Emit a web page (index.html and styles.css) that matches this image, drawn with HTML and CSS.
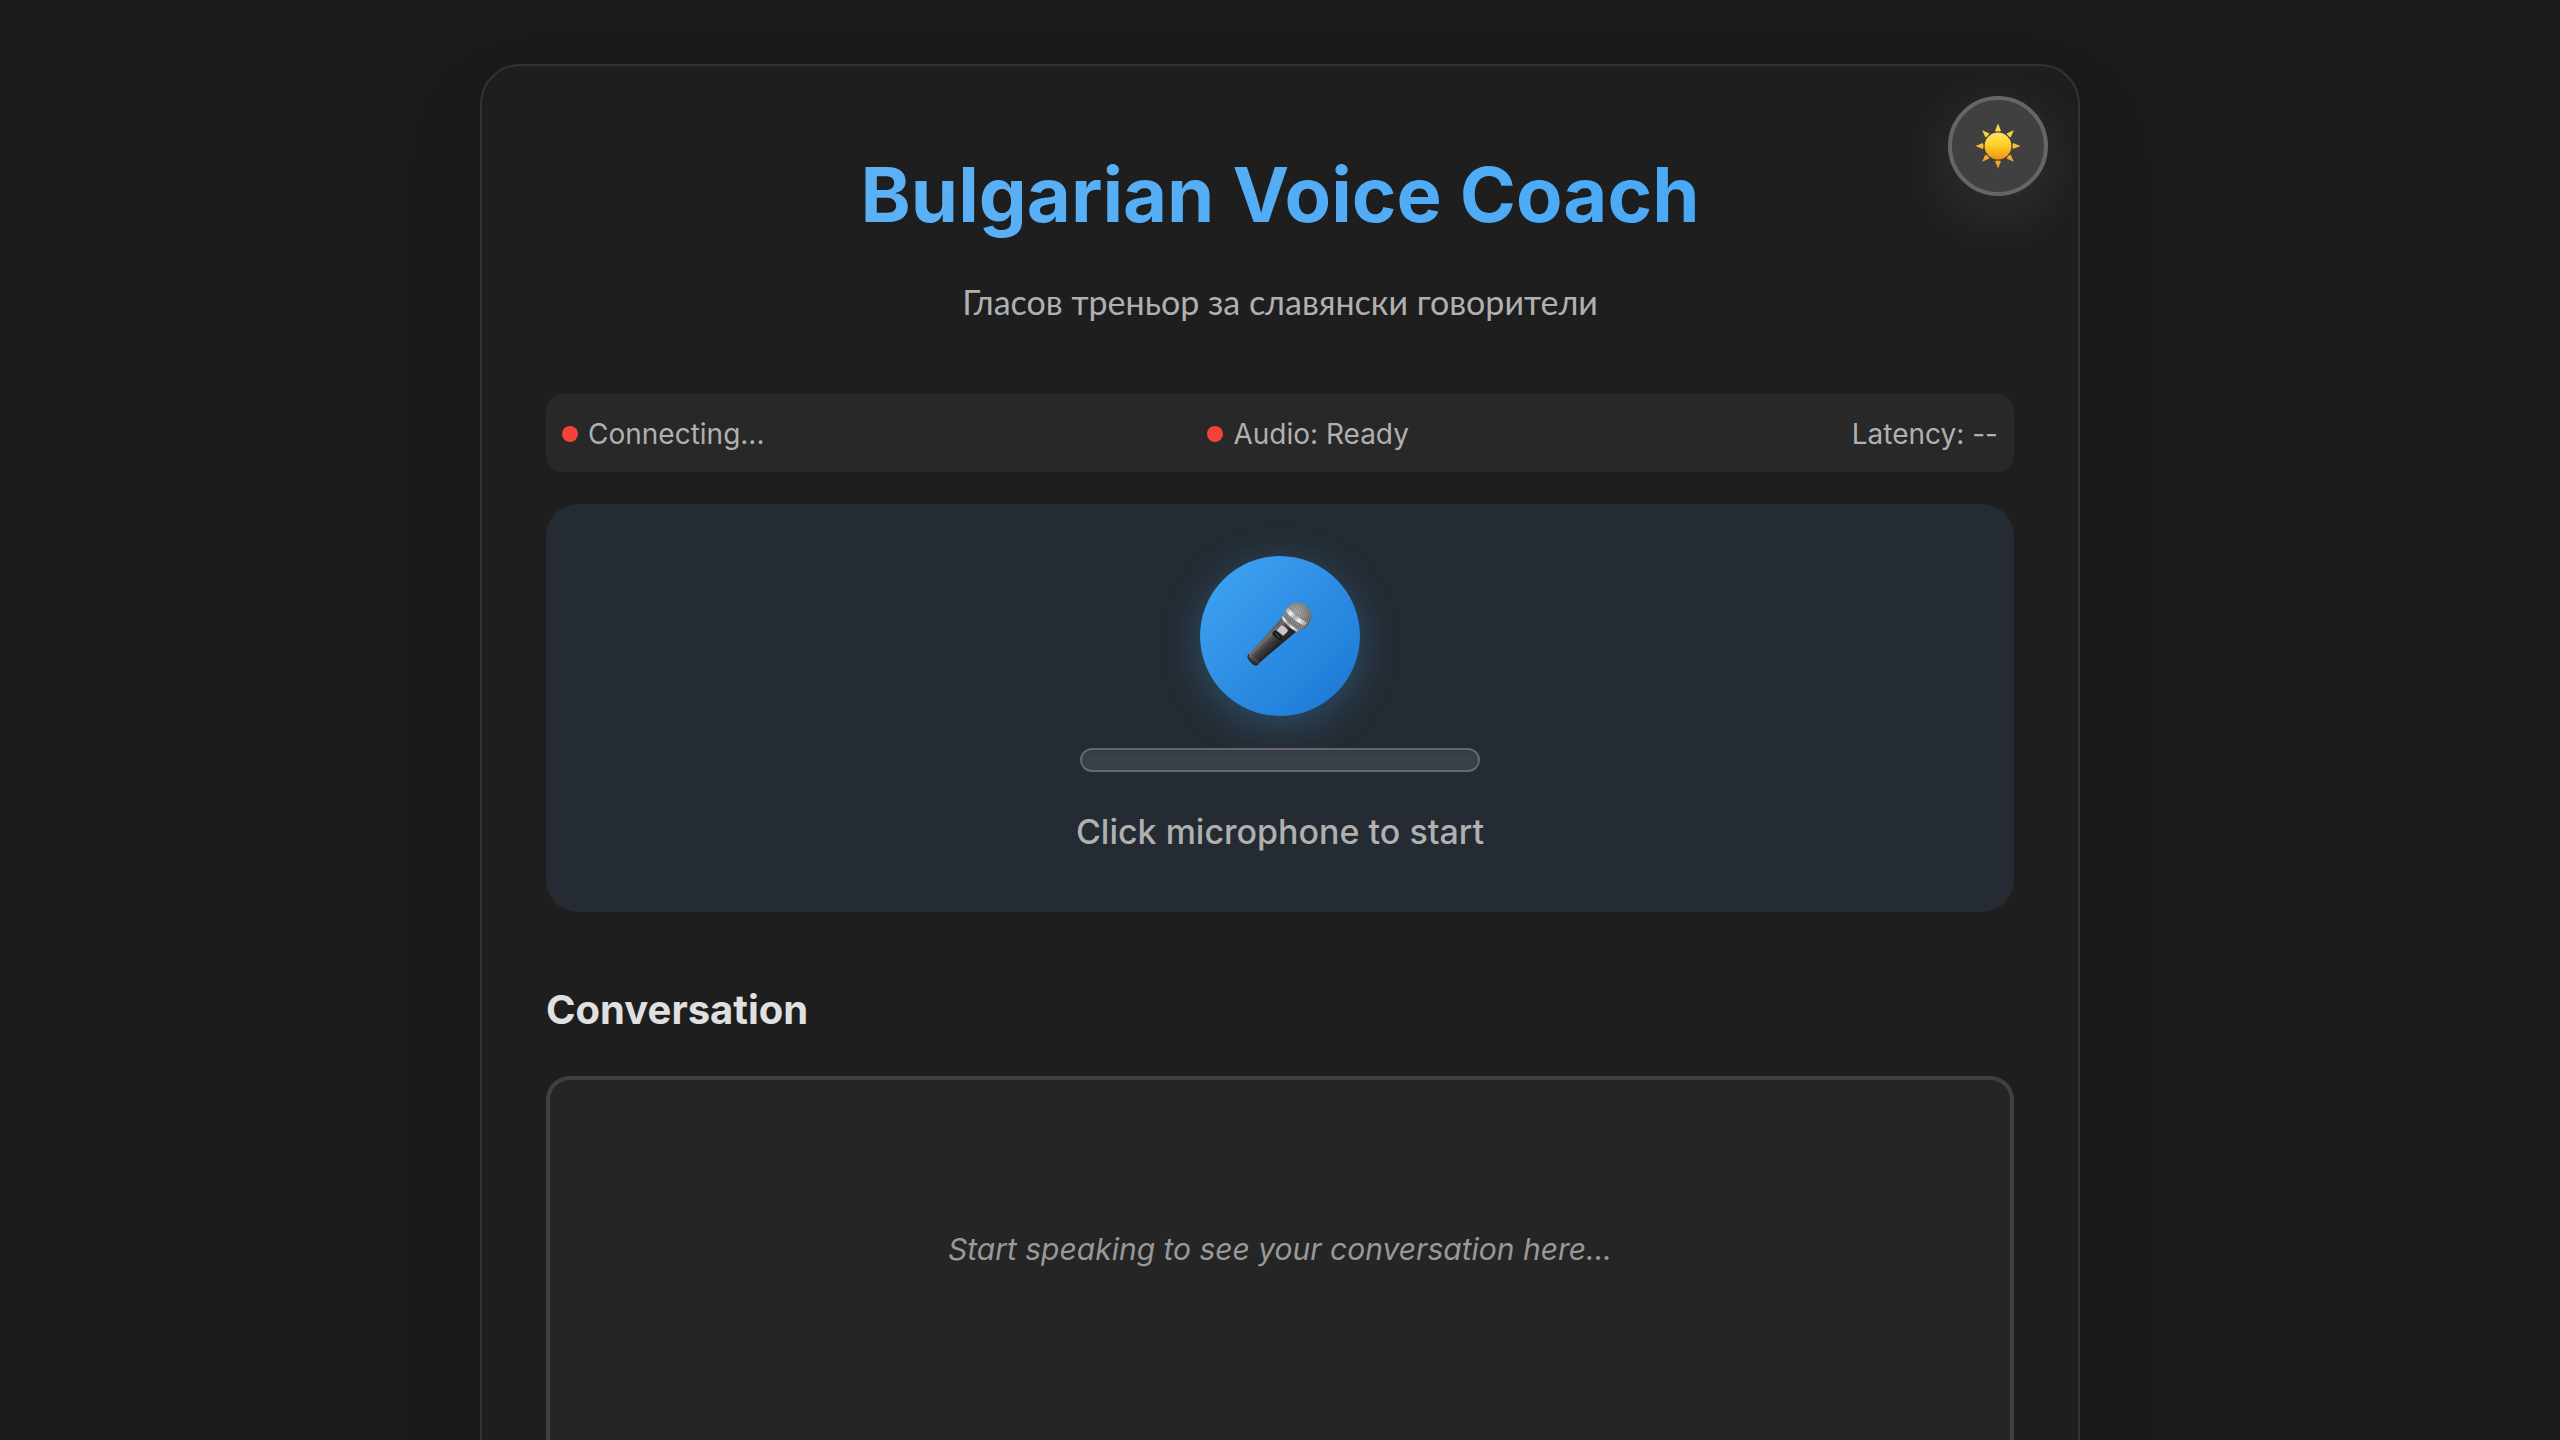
FILE: index.html
```html
<!DOCTYPE html>
<html lang="en">
<head>
<meta charset="utf-8">
<meta name="viewport" content="width=device-width, initial-scale=1">
<title>Bulgarian Voice Coach</title>
<link rel="stylesheet" href="styles.css">
</head>
<body>
<main class="container">
  <button class="theme-toggle" type="button" aria-label="Switch to light theme">
    <svg class="sun-icon" viewBox="-24 -24 48 48" aria-hidden="true">
      <defs>
        <linearGradient id="sun-disc" x1="0" y1="0" x2="0" y2="1">
          <stop offset="0" stop-color="#fde06a"/>
          <stop offset="0.25" stop-color="#fddb3e"/>
          <stop offset="0.5" stop-color="#fccb22"/>
          <stop offset="1" stop-color="#f2930f"/>
        </linearGradient>
        <linearGradient id="sun-rays" gradientUnits="userSpaceOnUse" x1="0" y1="-22" x2="0" y2="22">
          <stop offset="0" stop-color="#fde047"/>
          <stop offset="1" stop-color="#f59a28"/>
        </linearGradient>
      </defs>
      <path fill="url(#sun-rays)" d="M0-22.5 3-15Q0-13.8-3-15ZM0 22.5 3 15Q0 13.8-3 15ZM-22.5 0-15-3Q-13.8 0-15 3ZM22.5 0 15-3Q13.8 0 15 3ZM-15.8-15.8-8.6-12.6Q-9.8-9.8-12.6-8.6ZM15.8-15.8 8.6-12.6Q9.8-9.8 12.6-8.6ZM-15.8 15.8-8.6 12.6Q-9.8 9.8-12.6 8.6ZM15.8 15.8 8.6 12.6Q9.8 9.8 12.6 8.6Z"/>
      <circle r="13.4" fill="url(#sun-disc)"/>
    </svg>
  </button>

  <header class="header">
    <h1 class="title">Bulgarian Voice Coach</h1>
    <p class="subtitle" lang="bg">Гласов треньор за славянски говорители</p>
  </header>

  <div class="status-bar" role="status">
    <div class="status-item"><span class="status-dot"></span><span>Connecting...</span></div>
    <div class="status-item"><span class="status-dot"></span><span>Audio: Ready</span></div>
    <div class="status-item"><span>Latency: --</span></div>
  </div>

  <section class="voice-panel">
    <button class="mic-button" type="button" aria-label="Start recording">
      <svg class="mic-icon" viewBox="0 8 240 240" aria-hidden="true">
        <defs>
          <linearGradient id="mic-body" gradientUnits="userSpaceOnUse" x1="74" y1="124" x2="108" y2="160">
            <stop offset="0" stop-color="#5a5a5a"/>
            <stop offset="0.25" stop-color="#6f6f6f"/>
            <stop offset="0.5" stop-color="#444"/>
            <stop offset="1" stop-color="#242424"/>
          </linearGradient>
          <linearGradient id="mic-band" gradientUnits="userSpaceOnUse" x1="134" y1="48" x2="194" y2="106">
            <stop offset="0" stop-color="#8b8b8e"/>
            <stop offset="0.25" stop-color="#f4f4f6"/>
            <stop offset="0.45" stop-color="#a9a9ad"/>
            <stop offset="0.65" stop-color="#f0f0f2"/>
            <stop offset="1" stop-color="#858589"/>
          </linearGradient>
          <pattern id="mic-mesh" width="6" height="6" patternUnits="userSpaceOnUse" patternTransform="rotate(20)">
            <rect width="6" height="6" fill="#aaa9a6"/>
            <path d="M0 1.5H6M1.5 0V6" stroke="#5e5d5b" stroke-width="2"/>
          </pattern>
          <radialGradient id="mic-shade" cx="0.45" cy="0.35" r="0.65">
            <stop offset="0" stop-color="#fff" stop-opacity="0.25"/>
            <stop offset="1" stop-color="#333" stop-opacity="0.4"/>
          </radialGradient>
        </defs>
        <path d="M127 72 26 183Q22 190 27 198L40 212Q47 218 55 211L172 112Z" fill="url(#mic-body)"/>
        <path d="M26 183Q22 190 27 198L40 212Q47 218 55 211" fill="none" stroke="#242424" stroke-width="4"/>
        <path d="M30 184Q38 194 54 207" fill="none" stroke="#858585" stroke-width="2"/>
        <circle cx="173" cy="69" r="41" fill="url(#mic-mesh)"/>
        <circle cx="173" cy="69" r="41" fill="url(#mic-shade)"/>
        <path d="M139 45Q149 66 196 94L190 103 176 114Q137 86 125 72Q128 60 134 55Z" fill="url(#mic-mesh)"/>
        <path d="M144 42Q138 45 136 53Q157 80 193 98L203 89Q165 70 144 42Z" fill="url(#mic-band)"/>
        <path d="M129 67Q141 90 175 110L170 117Q137 94 125 74Z" fill="url(#mic-band)"/>
        <path d="M98 116 107 111 129 134 121 143 98 124Z" fill="#191919"/>
        <path d="M104 119 119 133" stroke="#858585" stroke-width="2"/>
        <path d="M110 111 123 97Q127 95 131 98L142 108Q145 112 142 115L130 127Z" fill="#cbc7c7"/>
      </svg>
    </button>
    <div class="volume-meter" role="meter" aria-label="Volume" aria-valuemin="0" aria-valuemax="100" aria-valuenow="0"></div>
    <p class="voice-status">Click microphone to start</p>
  </section>

  <section class="conversation">
    <h2 class="section-title">Conversation</h2>
    <div class="transcript">
      <p class="transcript-empty">Start speaking to see your conversation here...</p>
    </div>
  </section>
</main>
</body>
</html>
```
FILE: styles.css
```css
* {
  box-sizing: border-box;
}

body {
  margin: 0;
  padding: 64px 40px;
  background: #1a1a1a;
  color: #e0e0e0;
  font-family: Inter, "Liberation Sans", sans-serif;
  font-size: 28px;
}

h1, h2, p {
  margin: 0;
}

.container {
  position: relative;
  max-width: 1600px;
  margin: 0 auto;
  padding: 64px;
  background: #1e1e1e;
  border: 2px solid #333;
  border-radius: 40px;
  box-shadow: 0 40px 80px rgba(0, 0, 0, 0.1);
}

.theme-toggle {
  position: absolute;
  top: 30px;
  right: 30px;
  display: grid;
  place-items: center;
  width: 100px;
  height: 100px;
  padding: 0;
  background: #404040;
  border: 4px solid #666;
  border-radius: 50%;
  box-shadow: 0 16px 64px rgba(255, 255, 255, 0.1);
  cursor: pointer;
}

.sun-icon {
  width: 48px;
  height: 48px;
}

.header {
  margin-bottom: 64px;
  text-align: center;
}

.title {
  margin-bottom: 16px;
  background: linear-gradient(135deg, #64b5f6, #42a5f5);
  background-clip: text;
  color: transparent;
  font-size: 76px;
  font-weight: 700;
  line-height: 128px;
}

.subtitle {
  color: #b0b0b0;
  font-family: Lato, "Noto Sans", sans-serif;
  font-size: 34px;
  line-height: 56px;
}

.status-bar {
  display: flex;
  justify-content: space-between;
  margin-bottom: 32px;
  padding: 16px 16px 14px;
  background: #282828;
  border-radius: 16px;
  color: #b0b0b0;
  line-height: 48px;
}

.status-item {
  display: flex;
  align-items: center;
  gap: 10px;
}

.status-dot {
  width: 16px;
  height: 16px;
  background: #f44336;
  border-radius: 50%;
}

.voice-panel {
  display: flex;
  flex-direction: column;
  align-items: center;
  gap: 32px;
  padding: 52px;
  background: #242b32;
  border-radius: 32px;
}

.mic-button {
  display: grid;
  place-items: center;
  width: 160px;
  height: 160px;
  padding: 0;
  background: linear-gradient(135deg, #42a5f5, #1976d2);
  border: 0;
  border-radius: 50%;
  box-shadow: 0 8px 40px rgba(66, 165, 245, 0.3);
  cursor: pointer;
}

.mic-icon {
  width: 80px;
  height: 80px;
}

.volume-meter {
  width: 100%;
  max-width: 400px;
  height: 24px;
  background: #3b4148;
  border: 2px solid #636770;
  border-radius: 12px;
  box-shadow: inset 0 2px 6px rgba(0, 0, 0, 0.1);
}

.voice-status {
  color: #b0b0b0;
  font-size: 34px;
  font-weight: 500;
  line-height: 56px;
}

.conversation {
  margin-top: 64px;
}

.section-title {
  margin-bottom: 32px;
  font-size: 40px;
  font-weight: 700;
  line-height: 68px;
}

.transcript {
  min-height: 600px;
  padding: 48px;
  background: #252525;
  border: 4px solid #404040;
  border-radius: 24px;
}

.transcript-empty {
  padding: 96px 0;
  color: #999;
  font-size: 30px;
  font-style: italic;
  line-height: 50px;
  text-align: center;
}
```
